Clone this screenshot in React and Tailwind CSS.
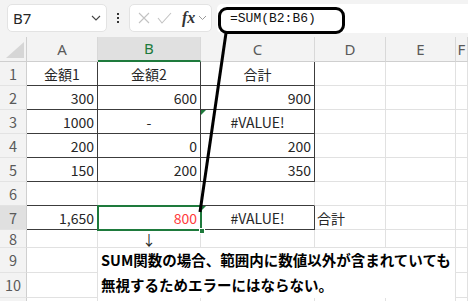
import React from "react";

const jp = { fontFamily: '"Noto Sans CJK JP", "Noto Sans", sans-serif' };

const cols = ["A", "B", "C", "D", "E", "F"];

// row data: [A, B, C, D]
const rows = [
  { n: 1, cells: [["金額1", "c"], ["金額2", "c"], ["合計", "c"], null] },
  { n: 2, cells: [["300", "r"], ["600", "r"], ["900", "r"], null] },
  { n: 3, cells: [["1000", "r"], ["-", "c"], ["#VALUE!", "c"], null] },
  { n: 4, cells: [["200", "r"], ["0", "r"], ["200", "r"], null] },
  { n: 5, cells: [["150", "r"], ["200", "r"], ["350", "r"], null] },
  { n: 6, cells: [null, null, null, null] },
  { n: 7, cells: [["1,650", "r"], ["800", "r", "red"], ["#VALUE!", "c"], ["合計", "l"]] },
  { n: 8, cells: [null, ["↓", "c"], null, null] },
];

function Cell({ data, dark, darkBottom, tri }) {
  const align =
    data && data[1] === "r" ? "justify-end pr-[3px]" : data && data[1] === "l" ? "justify-start pl-[2px]" : "justify-center";
  return (
    <div
      className={`relative flex items-center border-r border-b text-[14px] leading-none ${align} ${
        dark ? "border-r-[#3c3c3c]" : "border-r-[#e1e1e1]"
      } ${dark || darkBottom ? "border-b-[#3c3c3c]" : "border-b-[#e1e1e1]"} ${
        data && data[2] === "red" ? "text-[#ff3b3b]" : "text-[#262626]"
      }`}
    >
      {tri && (
        <span className="absolute left-0 top-0 h-0 w-0 border-t-[5px] border-r-[5px] border-t-[#1e7a3c] border-r-transparent" />
      )}
      {data ? data[0] : null}
    </div>
  );
}

function RowHead({ n, active }) {
  return (
    <div
      className={`flex items-center justify-center border-r border-b border-r-[#cfcfcf] border-b-[#e3e3e3] text-[14.5px] text-[#5a5a5a] ${
        active ? "bg-[#e0e0e0]" : "bg-[#f3f3f3]"
      }`}
    >
      {n}
    </div>
  );
}

export default function App() {
  return (
    <div className="relative h-[301px] w-[468px] overflow-hidden bg-white" style={jp}>
      {/* top bar */}
      <div className="flex h-[37px] items-start gap-0 bg-[#f3f3f3] pt-[4px]">
        <div className="ml-[7px] flex h-[28px] w-[100px] items-center justify-between rounded-[5px] border border-[#e3e3e3] bg-white pl-[5px] pr-[5px]">
          <span className="text-[15px] text-[#262626]" style={{ fontFamily: '"Noto Sans", sans-serif' }}>
            B7
          </span>
          <svg width="10" height="6" viewBox="0 0 10 6" fill="none" stroke="#444" strokeWidth="1.1">
            <path d="M1 1l4 4 4-4" />
          </svg>
        </div>
        <div className="flex h-[28px] w-[22px] flex-col items-center justify-center gap-[2px]">
          <span className="h-[2px] w-[2px] bg-[#333]" />
          <span className="h-[2px] w-[2px] bg-[#333]" />
          <span className="h-[2px] w-[2px] bg-[#333]" />
        </div>
        <div className="flex h-[28px] w-[83px] items-center rounded-[5px] border border-[#e3e3e3] bg-white pl-[7px]">
          <svg width="14" height="14" viewBox="0 0 14 14" stroke="#c2c2c2" strokeWidth="1.1" fill="none">
            <path d="M2 2l10 10M12 2L2 12" />
          </svg>
          <svg className="ml-[6px]" width="15" height="14" viewBox="0 0 15 14" stroke="#c2c2c2" strokeWidth="1.1" fill="none">
            <path d="M1 7l4 5L14 2" />
          </svg>
          <span
            className="ml-[10px] text-[16px] italic font-bold text-[#333]"
            style={{ fontFamily: '"Liberation Serif", serif' }}
          >
            fx
          </span>
          <svg className="ml-[3px]" width="9" height="6" viewBox="0 0 9 6" fill="none" stroke="#9a9a9a" strokeWidth="1">
            <path d="M1 1l3.5 3.5L8 1" />
          </svg>
        </div>
        <div className="ml-[5px] flex h-[29px] flex-1 items-center rounded-l-[5px] bg-white pl-[13px]">
          <span className="text-[13px] text-[#111]" style={{ fontFamily: '"Liberation Mono", monospace' }}>
            =SUM(B2:B6)
          </span>
        </div>
      </div>

      {/* sheet */}
      <div className="grid grid-cols-[27px_71px_103px_114px_71px_70px_1fr] grid-rows-[25px_24px_24px_24px_24px_24px_24px_24px_18px_25px_25px_24px]">
        {/* header row */}
        <div className="relative border-r border-b border-r-[#cfcfcf] border-b-[#cfcfcf] bg-[#f3f3f3]">
          <svg className="absolute right-[2px] bottom-[3px]" width="18" height="16" viewBox="0 0 18 16">
            <path d="M18 0V16H0Z" fill="#d6d6d6" />
          </svg>
        </div>
        {cols.map((c) => (
          <div
            key={c}
            className={`flex items-center justify-center border-r text-[15px] ${
              c === "B"
                ? "border-b-2 border-b-[#1e7a3c] bg-[#e0e0e0] text-[#1e7a3c]"
                : "border-b border-b-[#cfcfcf] bg-[#f3f3f3] text-[#5a5a5a]"
            } border-r-[#d8d8d8]`}
            style={{ fontFamily: '"Noto Sans", sans-serif' }}
          >
            {c}
          </div>
        ))}

        {rows.map((r) => (
          <React.Fragment key={r.n}>
            <RowHead n={r.n} active={r.n === 7} />
            {r.cells.map((d, i) => (
              <Cell
                key={i}
                data={d}
                dark={(r.n <= 5 || r.n === 7) && i < 3}
                darkBottom={r.n === 6 && i < 3}
                tri={i === 2 && (r.n === 3 || r.n === 7)}
              />
            ))}
            <Cell data={null} />
            <Cell data={null} />
          </React.Fragment>
        ))}

        {/* rows 9-10 */}
        <RowHead n={9} />
        <Cell data={null} />
        <div className="col-span-4 row-span-2 flex flex-col border-r border-r-[#e1e1e1] bg-white pl-[3px] text-[14.5px] font-bold leading-none text-black">
          <div className="flex h-[25px] items-center">SUM関数の場合、範囲内に数値以外が含まれていても</div>
          <div className="flex h-[25px] items-center">無視するためエラーにはならない。</div>
        </div>
        <Cell data={null} />
        <RowHead n={10} />
        <Cell data={null} />
        <Cell data={null} />
        <RowHead n="" />
        {cols.map((c) => (
          <Cell key={c} data={null} />
        ))}
      </div>

      {/* selection on B7 */}
      <div className="pointer-events-none absolute left-[97px] top-[205px] h-[26px] w-[105px] border-2 border-[#1e7a3c]" />
      <div className="pointer-events-none absolute left-[199px] top-[228px] h-[6px] w-[6px] border border-white bg-[#1e7a3c]" />

      {/* annotation */}
      <div className="pointer-events-none absolute left-[218px] top-[7px] h-[27px] w-[127px] rounded-[9px] border-[3px] border-black" />
      <svg className="pointer-events-none absolute left-0 top-0" width="468" height="301">
        <line x1="226" y1="33" x2="200" y2="212" stroke="#000" strokeWidth="3" />
      </svg>
    </div>
  );
}
